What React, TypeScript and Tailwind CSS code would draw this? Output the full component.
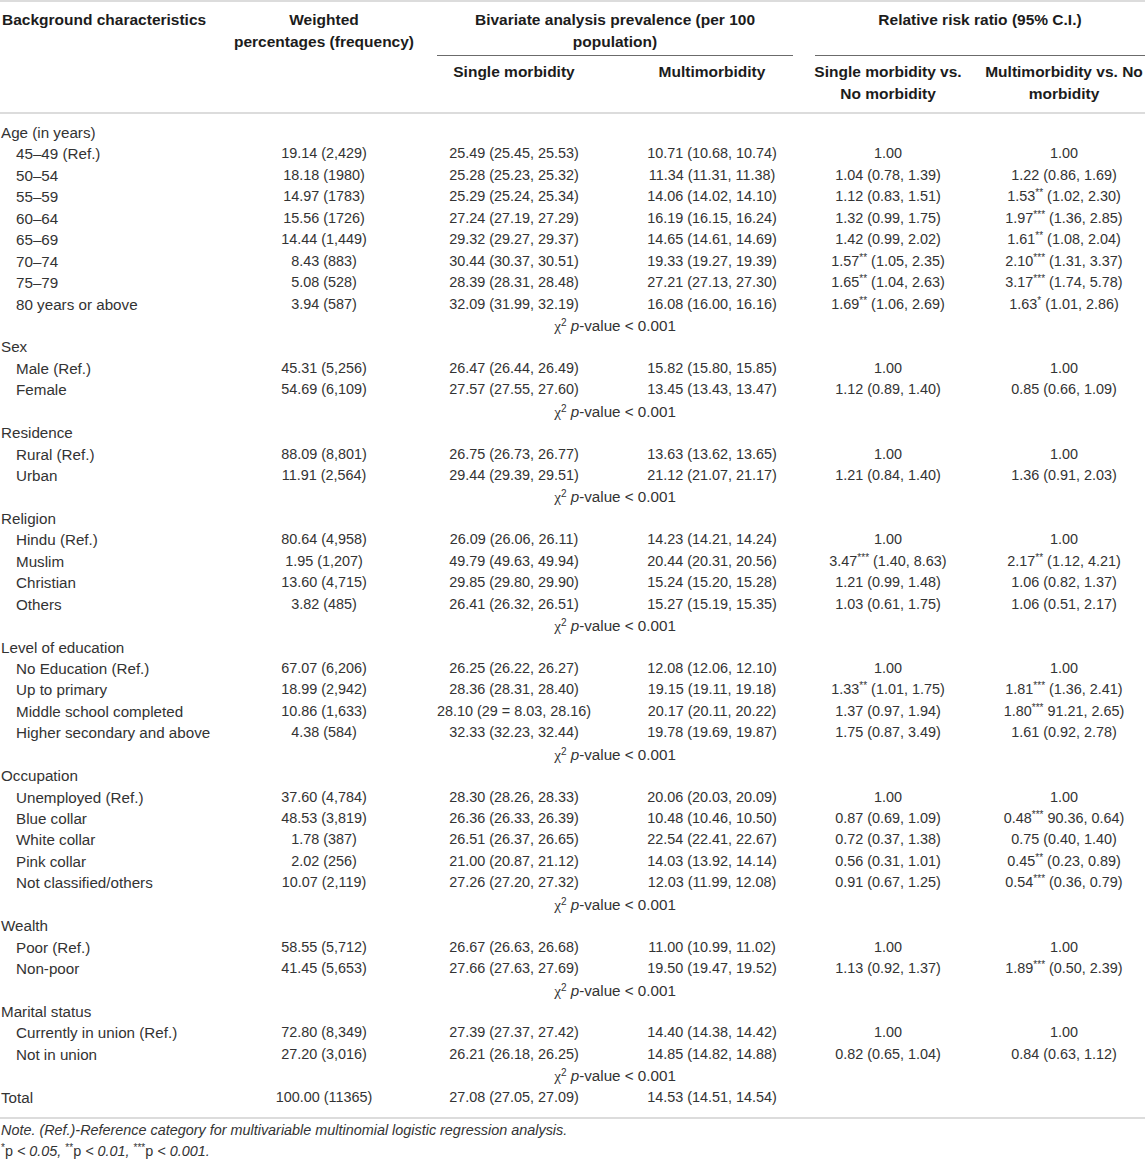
type Row =
  | { kind: "group"; label: string }
  | { kind: "chi" }
  | { kind: "item"; label: string; cells: string[]; total?: boolean }

const data: Row[] = [
  { kind: "group", label: "Age (in years)" },
  { kind: "item", label: "45–49 (Ref.)", cells: ["19.14 (2,429)", "25.49 (25.45, 25.53)", "10.71 (10.68, 10.74)", "1.00", "1.00"] },
  { kind: "item", label: "50–54", cells: ["18.18 (1980)", "25.28 (25.23, 25.32)", "11.34 (11.31, 11.38)", "1.04 (0.78, 1.39)", "1.22 (0.86, 1.69)"] },
  { kind: "item", label: "55–59", cells: ["14.97 (1783)", "25.29 (25.24, 25.34)", "14.06 (14.02, 14.10)", "1.12 (0.83, 1.51)", "1.53** (1.02, 2.30)"] },
  { kind: "item", label: "60–64", cells: ["15.56 (1726)", "27.24 (27.19, 27.29)", "16.19 (16.15, 16.24)", "1.32 (0.99, 1.75)", "1.97*** (1.36, 2.85)"] },
  { kind: "item", label: "65–69", cells: ["14.44 (1,449)", "29.32 (29.27, 29.37)", "14.65 (14.61, 14.69)", "1.42 (0.99, 2.02)", "1.61** (1.08, 2.04)"] },
  { kind: "item", label: "70–74", cells: ["8.43 (883)", "30.44 (30.37, 30.51)", "19.33 (19.27, 19.39)", "1.57** (1.05, 2.35)", "2.10*** (1.31, 3.37)"] },
  { kind: "item", label: "75–79", cells: ["5.08 (528)", "28.39 (28.31, 28.48)", "27.21 (27.13, 27.30)", "1.65** (1.04, 2.63)", "3.17*** (1.74, 5.78)"] },
  { kind: "item", label: "80 years or above", cells: ["3.94 (587)", "32.09 (31.99, 32.19)", "16.08 (16.00, 16.16)", "1.69** (1.06, 2.69)", "1.63* (1.01, 2.86)"] },
  { kind: "chi" },
  { kind: "group", label: "Sex" },
  { kind: "item", label: "Male (Ref.)", cells: ["45.31 (5,256)", "26.47 (26.44, 26.49)", "15.82 (15.80, 15.85)", "1.00", "1.00"] },
  { kind: "item", label: "Female", cells: ["54.69 (6,109)", "27.57 (27.55, 27.60)", "13.45 (13.43, 13.47)", "1.12 (0.89, 1.40)", "0.85 (0.66, 1.09)"] },
  { kind: "chi" },
  { kind: "group", label: "Residence" },
  { kind: "item", label: "Rural (Ref.)", cells: ["88.09 (8,801)", "26.75 (26.73, 26.77)", "13.63 (13.62, 13.65)", "1.00", "1.00"] },
  { kind: "item", label: "Urban", cells: ["11.91 (2,564)", "29.44 (29.39, 29.51)", "21.12 (21.07, 21.17)", "1.21 (0.84, 1.40)", "1.36 (0.91, 2.03)"] },
  { kind: "chi" },
  { kind: "group", label: "Religion" },
  { kind: "item", label: "Hindu (Ref.)", cells: ["80.64 (4,958)", "26.09 (26.06, 26.11)", "14.23 (14.21, 14.24)", "1.00", "1.00"] },
  { kind: "item", label: "Muslim", cells: ["1.95 (1,207)", "49.79 (49.63, 49.94)", "20.44 (20.31, 20.56)", "3.47*** (1.40, 8.63)", "2.17** (1.12, 4.21)"] },
  { kind: "item", label: "Christian", cells: ["13.60 (4,715)", "29.85 (29.80, 29.90)", "15.24 (15.20, 15.28)", "1.21 (0.99, 1.48)", "1.06 (0.82, 1.37)"] },
  { kind: "item", label: "Others", cells: ["3.82 (485)", "26.41 (26.32, 26.51)", "15.27 (15.19, 15.35)", "1.03 (0.61, 1.75)", "1.06 (0.51, 2.17)"] },
  { kind: "chi" },
  { kind: "group", label: "Level of education" },
  { kind: "item", label: "No Education (Ref.)", cells: ["67.07 (6,206)", "26.25 (26.22, 26.27)", "12.08 (12.06, 12.10)", "1.00", "1.00"] },
  { kind: "item", label: "Up to primary", cells: ["18.99 (2,942)", "28.36 (28.31, 28.40)", "19.15 (19.11, 19.18)", "1.33** (1.01, 1.75)", "1.81*** (1.36, 2.41)"] },
  { kind: "item", label: "Middle school completed", cells: ["10.86 (1,633)", "28.10 (29 = 8.03, 28.16)", "20.17 (20.11, 20.22)", "1.37 (0.97, 1.94)", "1.80*** 91.21, 2.65)"] },
  { kind: "item", label: "Higher secondary and above", cells: ["4.38 (584)", "32.33 (32.23, 32.44)", "19.78 (19.69, 19.87)", "1.75 (0.87, 3.49)", "1.61 (0.92, 2.78)"] },
  { kind: "chi" },
  { kind: "group", label: "Occupation" },
  { kind: "item", label: "Unemployed (Ref.)", cells: ["37.60 (4,784)", "28.30 (28.26, 28.33)", "20.06 (20.03, 20.09)", "1.00", "1.00"] },
  { kind: "item", label: "Blue collar", cells: ["48.53 (3,819)", "26.36 (26.33, 26.39)", "10.48 (10.46, 10.50)", "0.87 (0.69, 1.09)", "0.48*** 90.36, 0.64)"] },
  { kind: "item", label: "White collar", cells: ["1.78 (387)", "26.51 (26.37, 26.65)", "22.54 (22.41, 22.67)", "0.72 (0.37, 1.38)", "0.75 (0.40, 1.40)"] },
  { kind: "item", label: "Pink collar", cells: ["2.02 (256)", "21.00 (20.87, 21.12)", "14.03 (13.92, 14.14)", "0.56 (0.31, 1.01)", "0.45** (0.23, 0.89)"] },
  { kind: "item", label: "Not classified/others", cells: ["10.07 (2,119)", "27.26 (27.20, 27.32)", "12.03 (11.99, 12.08)", "0.91 (0.67, 1.25)", "0.54*** (0.36, 0.79)"] },
  { kind: "chi" },
  { kind: "group", label: "Wealth" },
  { kind: "item", label: "Poor (Ref.)", cells: ["58.55 (5,712)", "26.67 (26.63, 26.68)", "11.00 (10.99, 11.02)", "1.00", "1.00"] },
  { kind: "item", label: "Non-poor", cells: ["41.45 (5,653)", "27.66 (27.63, 27.69)", "19.50 (19.47, 19.52)", "1.13 (0.92, 1.37)", "1.89*** (0.50, 2.39)"] },
  { kind: "chi" },
  { kind: "group", label: "Marital status" },
  { kind: "item", label: "Currently in union (Ref.)", cells: ["72.80 (8,349)", "27.39 (27.37, 27.42)", "14.40 (14.38, 14.42)", "1.00", "1.00"] },
  { kind: "item", label: "Not in union", cells: ["27.20 (3,016)", "26.21 (26.18, 26.25)", "14.85 (14.82, 14.88)", "0.82 (0.65, 1.04)", "0.84 (0.63, 1.12)"] },
  { kind: "chi" },
  { kind: "item", label: "Total", total: true, cells: ["100.00 (11365)", "27.08 (27.05, 27.09)", "14.53 (14.51, 14.54)", "", ""] },
]

const cols = "grid grid-cols-[251px_146px_234px_162px_190px_162px]"

// splits "1.53** (1.02, 2.30)" so the stars can be raised
function Value({ text }: { text: string }) {
  const m = text.match(/^([\d.]+)(\*+)(.*)$/)
  if (!m) return <>{text}</>
  return (
    <>
      {m[1]}
      <sup className="text-[10px]">{m[2]}</sup>
      {m[3]}
    </>
  )
}

function ChiRow() {
  return (
    <div className={cols}>
      <div className="col-span-2" />
      <div className="col-span-2 ml-[40px] flex justify-center whitespace-nowrap text-[15.2px]">
        <span>
          <span className="font-['Liberation_Serif',serif]">χ</span>
          <sup className="text-[10px]">2</sup> <span className="italic">p</span>-value &lt; 0.001
        </span>
      </div>
    </div>
  )
}

function Head({ children, className = "" }: { children: React.ReactNode; className?: string }) {
  return <div className={`flex flex-col items-center whitespace-nowrap ${className}`}>{children}</div>
}

export default function App() {
  return (
    <div className="w-[1145px] overflow-hidden bg-white font-['Liberation_Sans',Arial,sans-serif] text-[15.2px] text-[#333]">
      {/* header */}
      <div className={`${cols} border-t-2 border-b-2 border-[#dcdcdc] text-[15.5px] font-bold leading-[22px] text-[#1c1c1c]`}>
        <div className="row-span-2 whitespace-nowrap pl-[2px] pt-[7px]">Background characteristics</div>
        <Head className="row-span-2 pt-[7px]">
          <span>Weighted</span>
          <span>percentages (frequency)</span>
        </Head>
        <Head className="col-span-2 ml-[40px] border-b border-[#6b6b6b] pt-[7px] pb-[2px]">
          <span>Bivariate analysis prevalence (per 100</span>
          <span>population)</span>
        </Head>
        <Head className="col-span-2 ml-[22px] border-b border-[#6b6b6b] pt-[7px] pb-[2px]">
          <span>Relative risk ratio (95% C.I.)</span>
        </Head>
        <Head className="pt-[5px] pb-[7px]">
          <span>Single morbidity</span>
        </Head>
        <Head className="pt-[5px] pb-[7px]">
          <span>Multimorbidity</span>
        </Head>
        <Head className="pt-[5px] pb-[7px]">
          <span>Single morbidity vs.</span>
          <span>No morbidity</span>
        </Head>
        <Head className="pt-[5px] pb-[7px]">
          <span>Multimorbidity vs. No</span>
          <span>morbidity</span>
        </Head>
      </div>

      {/* body */}
      <div className="border-b-2 border-[#dcdcdc] pt-[8px] pb-[9px] leading-[21.44px]">
        {data.map((row, i) => {
          if (row.kind === "chi") return <ChiRow key={i} />
          if (row.kind === "group")
            return (
              <div key={i} className={cols}>
                <div className="col-span-6 pl-[1px]">{row.label}</div>
              </div>
            )
          return (
            <div key={i} className={cols}>
              <div className={`whitespace-nowrap ${row.total ? "pl-[1px]" : "pl-[16px]"}`}>{row.label}</div>
              {row.cells.map((c, j) => (
                <div key={j} className="flex justify-center whitespace-nowrap text-[14.4px]">
                  <span>
                    <Value text={c} />
                  </span>
                </div>
              ))}
            </div>
          )
        })}
      </div>

      {/* notes */}
      <div className="pt-[1px] pl-[1px] text-[14.4px] leading-[21px] italic">
        <p>Note. (Ref.)-Reference category for multivariable multinomial logistic regression analysis.</p>
        <p>
          <sup className="not-italic text-[10px]">*</sup>
          <span className="not-italic">p</span> &lt; 0.05, <sup className="not-italic text-[10px]">**</sup>
          <span className="not-italic">p</span> &lt; 0.01, <sup className="not-italic text-[10px]">***</sup>
          <span className="not-italic">p</span> &lt; 0.001.
        </p>
      </div>
    </div>
  )
}
